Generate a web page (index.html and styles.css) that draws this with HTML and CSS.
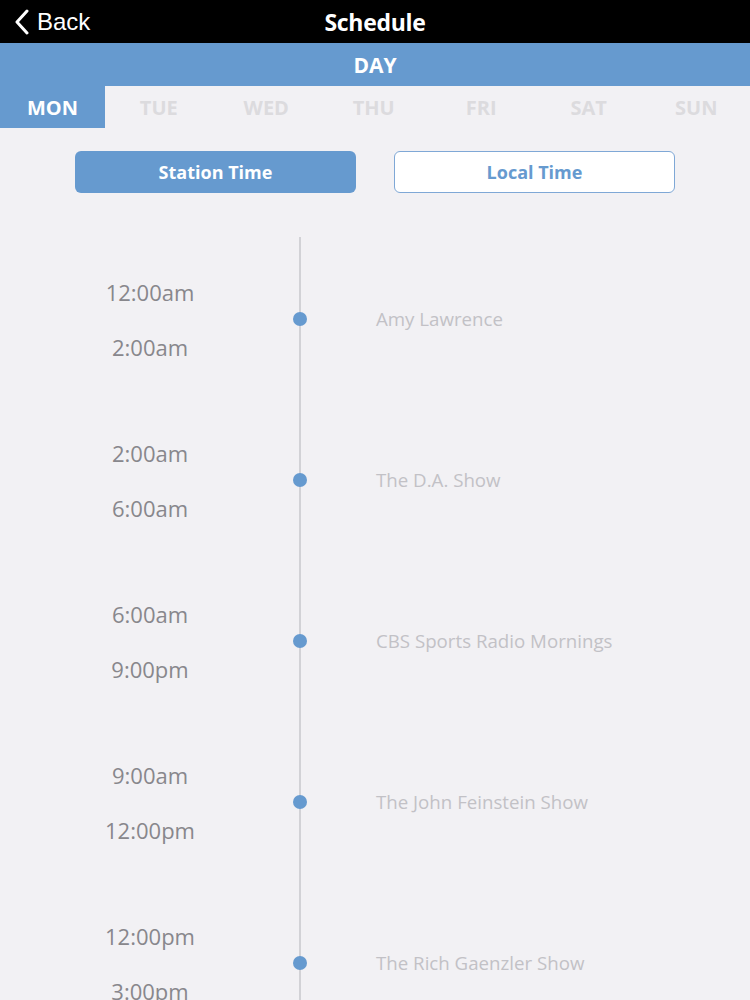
FILE: index.html
```html
<!DOCTYPE html>
<html>
<head>
<meta charset="utf-8">
<link rel="stylesheet" href="styles.css">
</head>
<body>
<div class="topbar">
  <div class="back">
    <svg class="chev" width="16" height="26" viewBox="0 0 16 26"><path d="M13 2 L3 13 L13 24" fill="none" stroke="#fff" stroke-width="3" stroke-linecap="round" stroke-linejoin="round"/></svg>
    <span>Back</span>
  </div>
  <div class="title">Schedule</div>
</div>
<div class="dayband">DAY</div>
<div class="tabs">
  <div class="tab active">MON</div>
  <div class="tab">TUE</div>
  <div class="tab">WED</div>
  <div class="tab">THU</div>
  <div class="tab">FRI</div>
  <div class="tab">SAT</div>
  <div class="tab">SUN</div>
</div>
<div class="toggle">
  <div class="btn filled">Station Time</div>
  <div class="btn outline">Local Time</div>
</div>
<div class="timeline">
  <div class="line"></div>
  <div class="item">
    <div class="times"><div>12:00am</div><div>2:00am</div></div>
    <div class="dotcol"><span class="dot"></span></div>
    <div class="show">Amy Lawrence</div>
  </div>
  <div class="item">
    <div class="times"><div>2:00am</div><div>6:00am</div></div>
    <div class="dotcol"><span class="dot"></span></div>
    <div class="show">The D.A. Show</div>
  </div>
  <div class="item">
    <div class="times"><div>6:00am</div><div>9:00pm</div></div>
    <div class="dotcol"><span class="dot"></span></div>
    <div class="show">CBS Sports Radio Mornings</div>
  </div>
  <div class="item">
    <div class="times"><div>9:00am</div><div>12:00pm</div></div>
    <div class="dotcol"><span class="dot"></span></div>
    <div class="show">The John Feinstein Show</div>
  </div>
  <div class="item">
    <div class="times"><div>12:00pm</div><div>3:00pm</div></div>
    <div class="dotcol"><span class="dot"></span></div>
    <div class="show">The Rich Gaenzler Show</div>
  </div>
</div>
</body>
</html>
```
FILE: styles.css
```css
html, body {
  margin: 0;
  padding: 0;
  background: #f2f1f4;
  font-family: "Open Sans", "Noto Sans", sans-serif;
  overflow: hidden;
  height: 1000px;
}
.topbar {
  height: 43px;
  background: #000;
  position: relative;
  display: flex;
  align-items: center;
  justify-content: center;
}
.back {
  position: absolute;
  left: 14px;
  top: 0;
  height: 43px;
  display: flex;
  align-items: center;
  gap: 7px;
  color: #fff;
  font-family: "Liberation Sans", Arial, sans-serif;
  font-size: 24px;
}
.title {
  color: #fff;
  font-weight: 700;
  font-size: 23px;
  letter-spacing: -0.3px;
}
.dayband {
  height: 43px;
  background: #669acf;
  color: #fff;
  font-weight: 700;
  font-size: 21px;
  display: flex;
  align-items: center;
  justify-content: center;
}
.tabs {
  display: grid;
  grid-template-columns: 105px repeat(6, 1fr);
  height: 42px;
  background: #f2f1f4;
}
.tab {
  display: flex;
  align-items: center;
  justify-content: center;
  font-weight: 700;
  font-size: 20px;
  color: #dcdbde;
}
.tab.active {
  background: #669acf;
  color: #fff;
}
.toggle {
  display: flex;
  justify-content: space-between;
  padding: 23px 75px 0 75px;
}
.btn {
  width: 281px;
  height: 42px;
  box-sizing: border-box;
  border-radius: 6px;
  display: flex;
  align-items: center;
  justify-content: center;
  font-weight: 700;
  font-size: 18px;
}
.btn.filled {
  background: #669acf;
  color: #fff;
}
.btn.outline {
  background: #fff;
  border: 1.5px solid #7fa8d6;
  color: #669acf;
}
.timeline {
  position: relative;
  margin-top: 45px;
}
.line {
  position: absolute;
  left: 299px;
  top: -1px;
  bottom: 0;
  width: 2px;
  background: #d2d2d6;
}
.item {
  height: 161px;
  display: flex;
  align-items: center;
  position: relative;
}
.times {
  width: 300px;
  text-align: center;
  font-size: 22px;
  color: #88878c;
  display: flex;
  flex-direction: column;
  gap: 25px;
  line-height: 30px;
  margin-top: 2px;
}
.dotcol {
  width: 0;
  display: flex;
  justify-content: center;
}
.dot {
  display: block;
  width: 14px;
  height: 14px;
  border-radius: 50%;
  background: #669acf;
  flex: none;
}
.show {
  margin-left: 76px;
  font-size: 18.7px;
  color: #c2c1c6;
}
```
